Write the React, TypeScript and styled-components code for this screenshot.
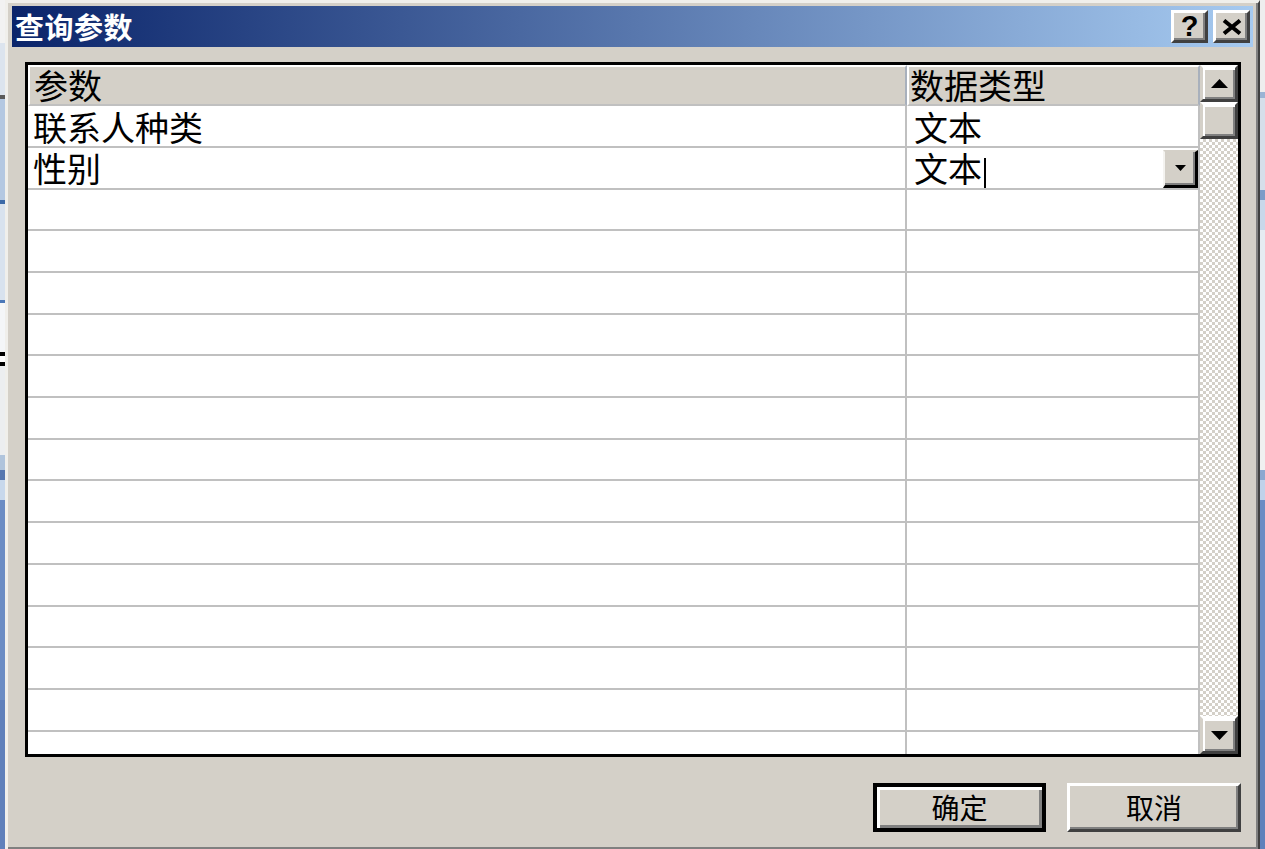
import React from 'react'
import styled, {createGlobalStyle, css} from 'styled-components'

const face = '#d4d0c8'
const gridLine = '#c0c0c0'

const GlobalStyle = createGlobalStyle`
  html, body {
    margin: 0;
    padding: 0;
    width: 1265px;
    height: 849px;
    overflow: hidden;
  }
  body {
    font-family: "Noto Sans CJK SC", "Noto Sans", sans-serif;
    background:
      linear-gradient(
        #f2f2f2 0 43px, #dce4ee 43px 95px, #5a5a5a 95px 99px, #b4c8e2 99px 200px,
        #3c6aa8 200px 204px, #d8e2ee 204px 300px, #4a78b8 300px 303px, #f4f6f8 303px 352px,
        #000 352px 356px, #fff 356px 362px, #000 362px 366px, #eceef0 366px 455px,
        #b0c4dc 455px 470px, #5878b0 470px 480px, #c8d8ec 480px 500px, #6b8cc4 500px 700px,
        #5f80bb 700px
      ) left top / 5px 100% no-repeat,
      linear-gradient(
        #eeeeee 0 92px, #9bb4d4 92px 98px, #d6dfea 98px 190px, #7d9cc8 190px 200px,
        #c8d8ea 200px 230px, #e6ecf2 230px 400px, #f0f0f0 400px 470px, #8ca8d0 470px 480px,
        #c0d2ea 480px 500px, #6b8cc4 500px 700px, #5f80bb 700px
      ) right top / 5px 100% no-repeat,
      #6b8cc4;
  }
`

// win2000 style raised edge
const raised = css`
  box-sizing: border-box;
  background: ${face};
  border-style: solid;
  border-width: 3px;
  border-color: #fff #404040 #404040 #fff;
  box-shadow: inset -2px -2px #808080;
`

const Dialog = styled.div`
  box-sizing: border-box;
  margin-left: 5px;
  width: 1255px;
  height: 851px;
  background: ${face};
  border-style: solid;
  border-width: 3px 2px 2px 3px;
  border-color: #f0efeb #404040 #404040 #f0efeb;
  box-shadow: inset -2px -2px #808080;
  padding: 3px 5px 0 4px;
  display: flex;
  flex-direction: column;
`

const TitleBar = styled.div`
  height: 41px;
  flex: none;
  display: flex;
  align-items: center;
  justify-content: space-between;
  padding: 0 3px;
  background: linear-gradient(to right, #0a246a, #a6caf0);
`

const TitleText = styled.span`
  color: #fff;
  font-size: 29px;
  font-weight: 700;
  line-height: 1.1;
  letter-spacing: 0.5px;
`

const TitleButtons = styled.div`
  display: flex;
  gap: 5px;
`

const CaptionButton = styled.button`
  ${raised}
  width: 37px;
  height: 33px;
  padding: 0;
  display: flex;
  align-items: center;
  justify-content: center;
  font-family: "Liberation Sans", Arial, sans-serif;
  font-weight: 700;
  font-size: 29px;
  line-height: 1;
  color: #000;
`

const Body = styled.div`
  flex: 1;
  display: flex;
  flex-direction: column;
  padding: 15px 12px 0 13px;
`

const Grid = styled.div`
  box-sizing: border-box;
  height: 695px;
  border: 3px solid #000;
  display: flex;
  background: #fff;
`

const Table = styled.div`
  flex: 1;
  min-width: 0;
  overflow: hidden;
`

const Columns = styled.div<{$height: string}>`
  display: grid;
  grid-template-columns: 879px 1fr;
  height: ${(p) => p.$height};
`

const HeaderCell = styled.div<{$pad: number}>`
  box-sizing: border-box;
  background: ${face};
  border-top: 2px solid #fff;
  border-left: 2px solid #fff;
  border-right: 2px solid #a8b0bc;
  border-bottom: 2px solid ${gridLine};
  padding-left: ${(p) => p.$pad}px;
  display: flex;
  align-items: center;
  font-size: 34px;
  line-height: 1.08;
  color: #000;
  white-space: nowrap;
`

const Cell = styled.div<{$pad: number}>`
  box-sizing: border-box;
  border-right: 2px solid ${gridLine};
  border-bottom: 2px solid ${gridLine};
  padding-left: ${(p) => p.$pad}px;
  padding-top: 2px;
  display: flex;
  align-items: center;
  font-size: 34px;
  line-height: 1.08;
  color: #000;
  white-space: nowrap;
`

const Caret = styled.span`
  align-self: flex-end;
  width: 2px;
  height: 30px;
  margin-left: 2px;
  background: #000;
`

const DropButton = styled.div`
  box-sizing: border-box;
  align-self: flex-end;
  margin-left: auto;
  width: 35px;
  height: 38px;
  background: ${face};
  border-style: solid;
  border-width: 2px 3px 3px 2px;
  border-color: ${face} #000 #000 #f4f3f0;
  box-shadow: inset -2px -2px #808080;
  display: flex;
  align-items: center;
  justify-content: center;
`

const ScrollBar = styled.div`
  width: 38px;
  flex: none;
  display: flex;
  flex-direction: column;
`

const ScrollButton = styled.div<{$h: number}>`
  ${raised}
  border-left-color: ${face};
  height: ${(p) => p.$h}px;
  flex: none;
  display: flex;
  align-items: center;
  justify-content: center;
  box-shadow: inset 2px 2px #fff, inset -2px -2px #808080;
`

const Track = styled.div`
  flex: 1;
  background: repeating-conic-gradient(${face} 0 25%, #fff 0 50%) 0 0 / 6px 6px;
`

const Footer = styled.div`
  margin-top: 26px;
  display: flex;
  justify-content: flex-end;
  gap: 21px;
`

const DialogButton = styled.button<{$default?: boolean}>`
  ${raised}
  width: ${(p) => (p.$default ? 173 : 174)}px;
  height: 49px;
  padding: 0;
  font-family: "Noto Sans CJK SC", sans-serif;
  font-size: 28px;
  line-height: 1.1;
  color: #000;
  display: flex;
  align-items: center;
  justify-content: center;
  ${(p) =>
    p.$default &&
    css`
      border: 4px solid #000;
      box-shadow: inset 3px 3px #fff, inset -3px -3px #808080;
    `}
`

const ArrowUp = () => (
  <svg width="17" height="9" viewBox="0 0 17 9">
    <polygon points="0,9 8.5,0 17,9" fill="#000" />
  </svg>
)

const ArrowDown = ({w = 17, h = 9}: {w?: number; h?: number}) => (
  <svg width={w} height={h} viewBox={`0 0 ${w} ${h}`}>
    <polygon points={`0,0 ${w},0 ${w / 2},${h}`} fill="#000" />
  </svg>
)

const CloseGlyph = () => (
  <svg width="20" height="16" viewBox="0 0 20 16">
    <path d="M2 1.5 L18 14.5 M18 1.5 L2 14.5" stroke="#000" strokeWidth="4" />
  </svg>
)

type Param = {name: string; type: string; editing?: boolean}

const params: Param[] = [
  {name: '联系人种类', type: '文本'},
  {name: '性别', type: '文本', editing: true},
]

const ROW_COUNT = 16

export default function App() {
  const rows: Param[] = Array.from({length: ROW_COUNT}, (_, i) => params[i] ?? {name: '', type: ''})
  return (
    <>
      <GlobalStyle />
      <Dialog>
        <TitleBar>
          <TitleText>查询参数</TitleText>
          <TitleButtons>
            <CaptionButton>?</CaptionButton>
            <CaptionButton>
              <CloseGlyph />
            </CaptionButton>
          </TitleButtons>
        </TitleBar>
        <Body>
          <Grid>
            <Table>
              <Columns $height="41px">
                <HeaderCell $pad={4}>参数</HeaderCell>
                <HeaderCell $pad={1}>数据类型</HeaderCell>
              </Columns>
              {rows.map((row, i) => (
                <Columns key={i} $height="41.73px">
                  <Cell $pad={5}>{row.name}</Cell>
                  <Cell $pad={7}>
                    {row.type}
                    {row.editing && (
                      <>
                        <Caret />
                        <DropButton>
                          <ArrowDown w={11} h={6} />
                        </DropButton>
                      </>
                    )}
                  </Cell>
                </Columns>
              ))}
            </Table>
            <ScrollBar>
              <ScrollButton $h={37}>
                <ArrowUp />
              </ScrollButton>
              <ScrollButton $h={37} />
              <Track />
              <ScrollButton $h={38}>
                <ArrowDown />
              </ScrollButton>
            </ScrollBar>
          </Grid>
          <Footer>
            <DialogButton $default>确定</DialogButton>
            <DialogButton>取消</DialogButton>
          </Footer>
        </Body>
      </Dialog>
    </>
  )
}
